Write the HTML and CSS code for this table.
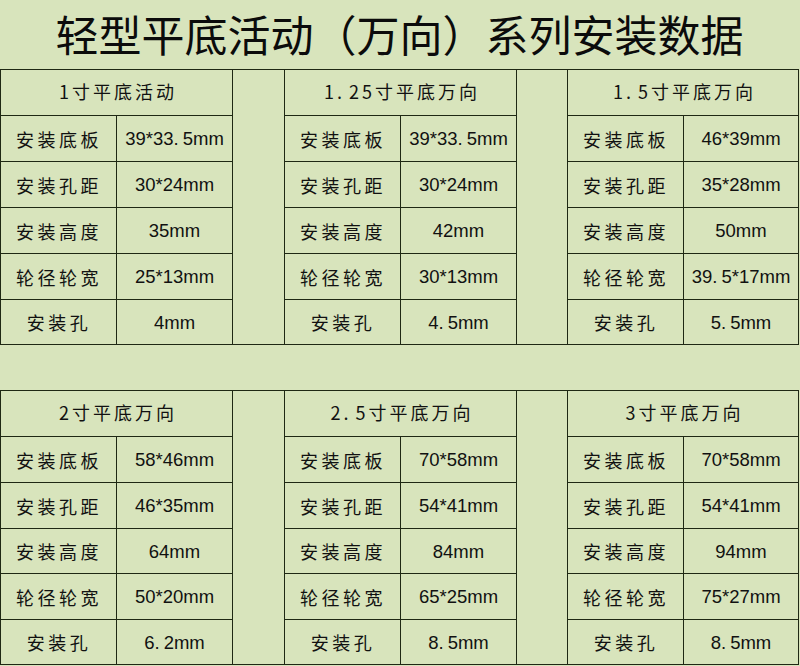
FILE: index.html
```html
<!DOCTYPE html>
<html lang="zh-CN">
<head>
<meta charset="utf-8">
<title>轻型平底活动（万向）系列安装数据</title>
<link rel="stylesheet" href="styles.css">
</head>
<body>
<div class="sheet">
  <h1 class="title">轻型平底活动（万向）系列安装数据</h1>

  <div class="band band-top">
    <div class="block">
      <div class="head">1寸平底活动</div>
      <div class="lbl">安装底板</div><div class="val">39*33<span class="pt">.</span>5mm</div>
      <div class="lbl">安装孔距</div><div class="val">30*24mm</div>
      <div class="lbl">安装高度</div><div class="val">35mm</div>
      <div class="lbl">轮径轮宽</div><div class="val">25*13mm</div>
      <div class="lbl">安装孔</div><div class="val">4mm</div>
    </div>
    <div class="spacer wide"></div>
    <div class="block">
      <div class="head">1<span class="pt">.</span>25寸平底万向</div>
      <div class="lbl">安装底板</div><div class="val">39*33<span class="pt">.</span>5mm</div>
      <div class="lbl">安装孔距</div><div class="val">30*24mm</div>
      <div class="lbl">安装高度</div><div class="val">42mm</div>
      <div class="lbl">轮径轮宽</div><div class="val">30*13mm</div>
      <div class="lbl">安装孔</div><div class="val">4<span class="pt">.</span>5mm</div>
    </div>
    <div class="spacer narrow"></div>
    <div class="block last">
      <div class="head">1<span class="pt">.</span>5寸平底万向</div>
      <div class="lbl">安装底板</div><div class="val">46*39mm</div>
      <div class="lbl">安装孔距</div><div class="val">35*28mm</div>
      <div class="lbl">安装高度</div><div class="val">50mm</div>
      <div class="lbl">轮径轮宽</div><div class="val">39<span class="pt">.</span>5*17mm</div>
      <div class="lbl">安装孔</div><div class="val">5<span class="pt">.</span>5mm</div>
    </div>
  </div>

  <div class="gap-row"></div>

  <div class="band band-bottom">
    <div class="block">
      <div class="head">2寸平底万向</div>
      <div class="lbl">安装底板</div><div class="val">58*46mm</div>
      <div class="lbl">安装孔距</div><div class="val">46*35mm</div>
      <div class="lbl">安装高度</div><div class="val">64mm</div>
      <div class="lbl">轮径轮宽</div><div class="val">50*20mm</div>
      <div class="lbl">安装孔</div><div class="val">6<span class="pt">.</span>2mm</div>
    </div>
    <div class="spacer wide"></div>
    <div class="block">
      <div class="head">2<span class="pt">.</span>5寸平底万向</div>
      <div class="lbl">安装底板</div><div class="val">70*58mm</div>
      <div class="lbl">安装孔距</div><div class="val">54*41mm</div>
      <div class="lbl">安装高度</div><div class="val">84mm</div>
      <div class="lbl">轮径轮宽</div><div class="val">65*25mm</div>
      <div class="lbl">安装孔</div><div class="val">8<span class="pt">.</span>5mm</div>
    </div>
    <div class="spacer narrow"></div>
    <div class="block last">
      <div class="head">3寸平底万向</div>
      <div class="lbl">安装底板</div><div class="val">70*58mm</div>
      <div class="lbl">安装孔距</div><div class="val">54*41mm</div>
      <div class="lbl">安装高度</div><div class="val">94mm</div>
      <div class="lbl">轮径轮宽</div><div class="val">75*27mm</div>
      <div class="lbl">安装孔</div><div class="val">8<span class="pt">.</span>5mm</div>
    </div>
  </div>
</div>
</body>
</html>
```

FILE: styles.css
```css
html, body {
  margin: 0;
  padding: 0;
  background: #d8e4bc;
}

body {
  width: 800px;
  height: 666px;
  overflow: hidden;
  color: #111;
  font-family: "Noto Sans CJK SC", "Liberation Sans", sans-serif;
}

.sheet {
  width: 800px;
  background: #d8e4bc;
}

.title {
  margin: 0;
  box-sizing: border-box;
  height: 70px;
  width: 799px;
  padding-bottom: 2px;
  border-bottom: 1px solid #1f2814;
  font-size: 43px;
  font-weight: 400;
  line-height: 67px;
  text-align: center;
  letter-spacing: 0;
  color: #0b0b0b;
}

.band {
  display: flex;
  width: 799px;
  box-sizing: border-box;
  border-left: 1px solid #1f2814;
}

.block {
  display: grid;
  grid-template-columns: 116px 116px;
  box-sizing: border-box;
}

.block.last {
  grid-template-columns: 116px 115px;
}

.band-top .block {
  grid-template-rows: 46px 46px 46px 46px 46px 45px;
}

.band-bottom .block {
  grid-template-rows: 46px 46px 46px 45px 46px 45px;
}

.head, .lbl, .val {
  box-sizing: border-box;
  display: flex;
  align-items: center;
  justify-content: center;
  border-bottom: 1px solid #1f2814;
  border-right: 1px solid #1f2814;
  white-space: nowrap;
}

.head {
  grid-column: 1 / 3;
  font-size: 18px;
  letter-spacing: 3px;
  padding-left: 3px;
  padding-bottom: 4px;
}

.lbl {
  font-size: 18px;
  letter-spacing: 3.5px;
  padding-left: 1px;
}

.val {
  font-family: "Liberation Sans", "Noto Sans CJK SC", sans-serif;
  font-size: 18.5px;
  padding-top: 1px;
}

.pt {
  margin-right: 4px;
}

.spacer {
  box-sizing: border-box;
  border-right: 1px solid #1f2814;
  border-bottom: 1px solid #1f2814;
}

.spacer.wide {
  width: 52px;
}

.spacer.narrow {
  width: 51px;
}

.gap-row {
  box-sizing: border-box;
  width: 799px;
  height: 46px;
  border-bottom: 1px solid #1f2814;
}
```
